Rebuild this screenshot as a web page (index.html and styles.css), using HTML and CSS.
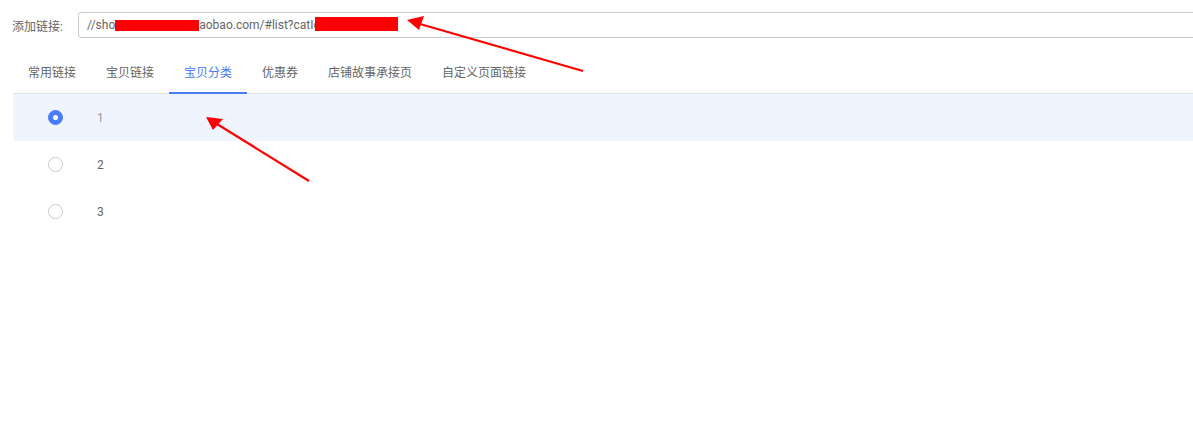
FILE: index.html
```html
<!DOCTYPE html>
<html lang="zh-CN">

<head>
    <meta charset="UTF-8">
    <meta name="viewport" content="width=device-width, initial-scale=1.0">
    <title>添加链接</title>
    <link rel="stylesheet" href="styles.css">
</head>

<body>

    <div class="page">

        <!-- 链接输入 -->
        <div class="link_row">
            <div class="link_label">添加链接:</div>
            <div class="link_input">
                <span>//sho</span><span class="mask mask1"></span><span>aobao.com/#list?catIo</span><span class="mask mask2"></span>
            </div>
        </div>

        <!-- 탭 -->
        <div class="tabs">
            <div class="tab">常用链接</div>
            <div class="tab">宝贝链接</div>
            <div class="tab active">宝贝分类</div>
            <div class="tab">优惠券</div>
            <div class="tab">店铺故事承接页</div>
            <div class="tab">自定义页面链接</div>
        </div>

        <!-- 分类列表 -->
        <ul class="cat_list">
            <li class="cat_item selected"><span class="radio"></span><span class="num">1</span></li>
            <li class="cat_item"><span class="radio"></span><span class="num">2</span></li>
            <li class="cat_item"><span class="radio"></span><span class="num">3</span></li>
        </ul>

    </div>

    <!-- 标注箭头 -->
    <svg class="marks" width="1193" height="424" viewBox="0 0 1193 424">
        <line x1="583" y1="71" x2="420" y2="24" stroke="#f00" stroke-width="2.2" />
        <polygon points="407,20 424,16 419,30" fill="#f00" />
        <line x1="309" y1="181" x2="217" y2="124" stroke="#f00" stroke-width="2.2" />
        <polygon points="206,117 223,119 213,130" fill="#f00" />
    </svg>

</body>

</html>
```

FILE: styles.css
```css
body {
    margin: 0;
    overflow: hidden;
    font-family: Roboto, "Noto Sans CJK SC", sans-serif;
    font-size: 12px;
    color: #666;
    background-color: #fff;
}

ul {
    list-style: none;
    margin: 0;
    padding: 0;
}

.page {
    padding: 12px 0 0 12px;
    width: 1220px;
}

.link_row {
    display: flex;
    align-items: center;
}

.link_label {
    width: 66px;
    color: #666;
}

.link_input {
    flex: 1;
    height: 24px;
    border: 1px solid #c9c9d1;
    border-radius: 3px;
    display: flex;
    align-items: center;
    padding-left: 8px;
    color: #666;
}

.mask {
    display: inline-block;
    background-color: #f00;
}

.mask1 {
    width: 84px;
    height: 11px;
    margin-top: 1px;
}

.mask2 {
    width: 83px;
    height: 14px;
    margin-left: -5px;
    margin-top: -2px;
}

.tabs {
    display: flex;
    margin: 17px 0 0 1px;
    border-bottom: 1px solid #e2e2e6;
}

.tab {
    padding: 0 15px;
    line-height: 37px;
    border-bottom: 2px solid transparent;
    margin-bottom: -1px;
    color: #666;
}

.tab.active {
    color: #4a7cf6;
    border-bottom-color: #4a7cf6;
}

.cat_list {
    margin-left: 1px;
}

.cat_item {
    height: 47px;
    display: flex;
    align-items: center;
    padding-left: 35px;
}

.cat_item.selected {
    background-color: #eef5fe;
}

.radio {
    width: 13px;
    height: 13px;
    border: 1px solid #c8c8d0;
    border-radius: 50%;
    background-color: #fff;
    position: relative;
}

.selected .radio {
    border-color: #4a7cf6;
    background-color: #4a7cf6;
}

.selected .radio::after {
    content: "";
    position: absolute;
    left: 4px;
    top: 4px;
    width: 5px;
    height: 5px;
    border-radius: 50%;
    background-color: #fff;
}

.num {
    margin-left: 34px;
    color: #666;
}

.selected .num {
    color: #999;
}

.marks {
    position: absolute;
    left: 0;
    top: 0;
    pointer-events: none;
}
```
